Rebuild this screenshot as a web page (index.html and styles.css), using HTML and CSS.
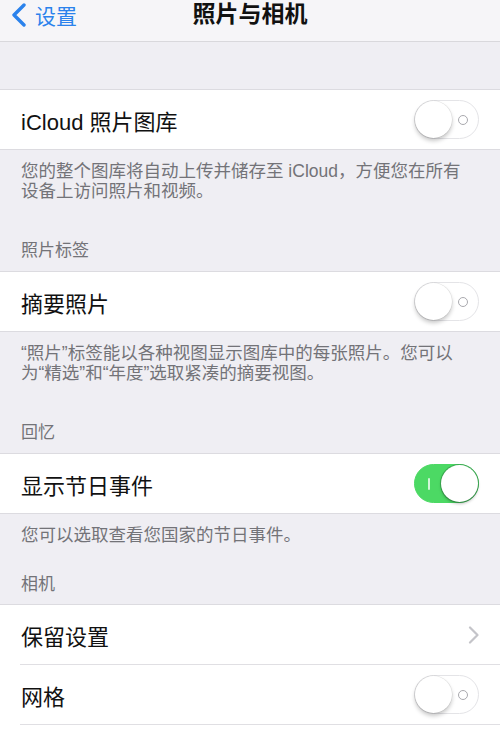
FILE: index.html
```html
<!DOCTYPE html>
<html lang="zh-CN">
<head>
    <meta charset="UTF-8">
    <meta name="viewport" content="width=device-width, initial-scale=1.0">
    <title>照片与相机</title>
    <link rel="stylesheet" href="styles.css">
</head>
<body>
    <div class="nav">
        <a class="back" href="#">
            <svg class="back-icon" width="18" height="24" viewBox="0 0 18 24">
                <path d="M14 2 L4 12 L14 22" fill="none" stroke="#2b82ec" stroke-width="3.4" stroke-linecap="round" stroke-linejoin="round"/>
            </svg>
            设置
        </a>
        <h1 class="title">照片与相机</h1>
        <span></span>
    </div>

    <div class="spacer"></div>

    <div class="group">
        <div class="cell">
            <div class="cell-body">
                <span class="label">iCloud 照片图库</span>
                <span class="switch"><span class="knob"></span><span class="ring"></span></span>
            </div>
        </div>
    </div>
    <p class="note">您的整个图库将自动上传并储存至 iCloud，方便您在所有设备上访问照片和视频。</p>

    <h2 class="group-title">照片标签</h2>
    <div class="group">
        <div class="cell">
            <div class="cell-body">
                <span class="label">摘要照片</span>
                <span class="switch"><span class="knob"></span><span class="ring"></span></span>
            </div>
        </div>
    </div>
    <p class="note">“照片”标签能以各种视图显示图库中的每张照片。您可以为“精选”和“年度”选取紧凑的摘要视图。</p>

    <h2 class="group-title">回忆</h2>
    <div class="group">
        <div class="cell">
            <div class="cell-body">
                <span class="label">显示节日事件</span>
                <span class="switch on"><span class="mark"></span><span class="knob"></span></span>
            </div>
        </div>
    </div>
    <p class="note">您可以选取查看您国家的节日事件。</p>

    <h2 class="group-title near">相机</h2>
    <div class="group open">
        <div class="cell">
            <div class="cell-body">
                <span class="label">保留设置</span>
                <svg class="chevron" width="12" height="18" viewBox="0 0 12 18">
                    <path d="M2 1.5 L9.5 9 L2 16.5" fill="none" stroke="#c4c4c9" stroke-width="2.2" stroke-linecap="round" stroke-linejoin="round"/>
                </svg>
            </div>
        </div>
        <div class="cell">
            <div class="cell-body">
                <span class="label">网格</span>
                <span class="switch"><span class="knob"></span><span class="ring"></span></span>
            </div>
        </div>
        <div class="cell">
            <div class="cell-body"></div>
        </div>
    </div>
</body>
</html>
```

FILE: styles.css
```css
body {
    margin: 0;
    width: 500px;
    height: 737px;
    overflow: hidden;
    background: #efeef3;
    font-family: "Liberation Sans", "Noto Sans CJK SC", sans-serif;
}
.nav {
    height: 42px;
    box-sizing: border-box;
    background: #f6f5f8;
    border-bottom: 1px solid #d9d8dc;
    display: grid;
    grid-template-columns: 1fr auto 1fr;
    align-items: start;
}
.back {
    display: flex;
    align-items: center;
    gap: 7px;
    padding-left: 10px;
    height: 29px;
    color: #2b82ec;
    font-size: 21px;
    text-decoration: none;
}
.title {
    margin: 0;
    font-size: 23px;
    line-height: 29px;
    font-weight: bold;
    color: #111;
}
.spacer {
    height: 47px;
}
.group {
    background: #fff;
    border-top: 1px solid #dcdbe0;
    border-bottom: 1px solid #dcdbe0;
}
.group.open {
    border-bottom: none;
}
.cell {
    padding-left: 20px;
}
.cell-body {
    height: 60px;
    box-sizing: border-box;
    display: flex;
    align-items: center;
    justify-content: space-between;
    padding-right: 21px;
    border-bottom: 1px solid #e0dfe3;
}
.group:not(.open) .cell:last-child .cell-body {
    height: 59px;
    border-bottom: none;
}
.label {
    font-size: 22px;
    color: #111;
    padding-left: 1px;
}
.note {
    margin: 0;
    padding: 11px 33px 0 21px;
    font-size: 17.5px;
    line-height: 20px;
    color: #737378;
}
.group-title {
    margin: 0;
    padding: 40px 20px 10px 21px;
    font-size: 17px;
    line-height: 20px;
    font-weight: normal;
    color: #737378;
}
.group-title.near {
    padding-top: 30px;
    padding-bottom: 9px;
}
.switch {
    width: 65px;
    height: 39px;
    box-sizing: border-box;
    border-radius: 20px;
    border: 1.5px solid #e4e4e7;
    background: #fff;
    display: flex;
    align-items: center;
    justify-content: space-between;
}
.knob {
    width: 37px;
    height: 37px;
    border-radius: 50%;
    background: #fff;
    box-shadow: 0 3px 4px rgba(0, 0, 0, 0.22), 0 0 0 0.5px rgba(0, 0, 0, 0.1);
}
.ring {
    width: 8px;
    height: 8px;
    border-radius: 50%;
    border: 1.5px solid #a9a9ae;
    margin-right: 10px;
}
.switch.on {
    background: #4cd964;
    border-color: #4cd964;
}
.switch.on .knob {
    box-shadow: 0 2px 3px rgba(0, 0, 0, 0.25), 0 0 0 1px rgba(40, 120, 60, 0.45);
}
.mark {
    width: 2px;
    height: 12px;
    border-radius: 1px;
    background: rgba(255, 255, 255, 0.75);
    margin-left: 13px;
}
.chevron {
    margin-right: -1px;
}
```
